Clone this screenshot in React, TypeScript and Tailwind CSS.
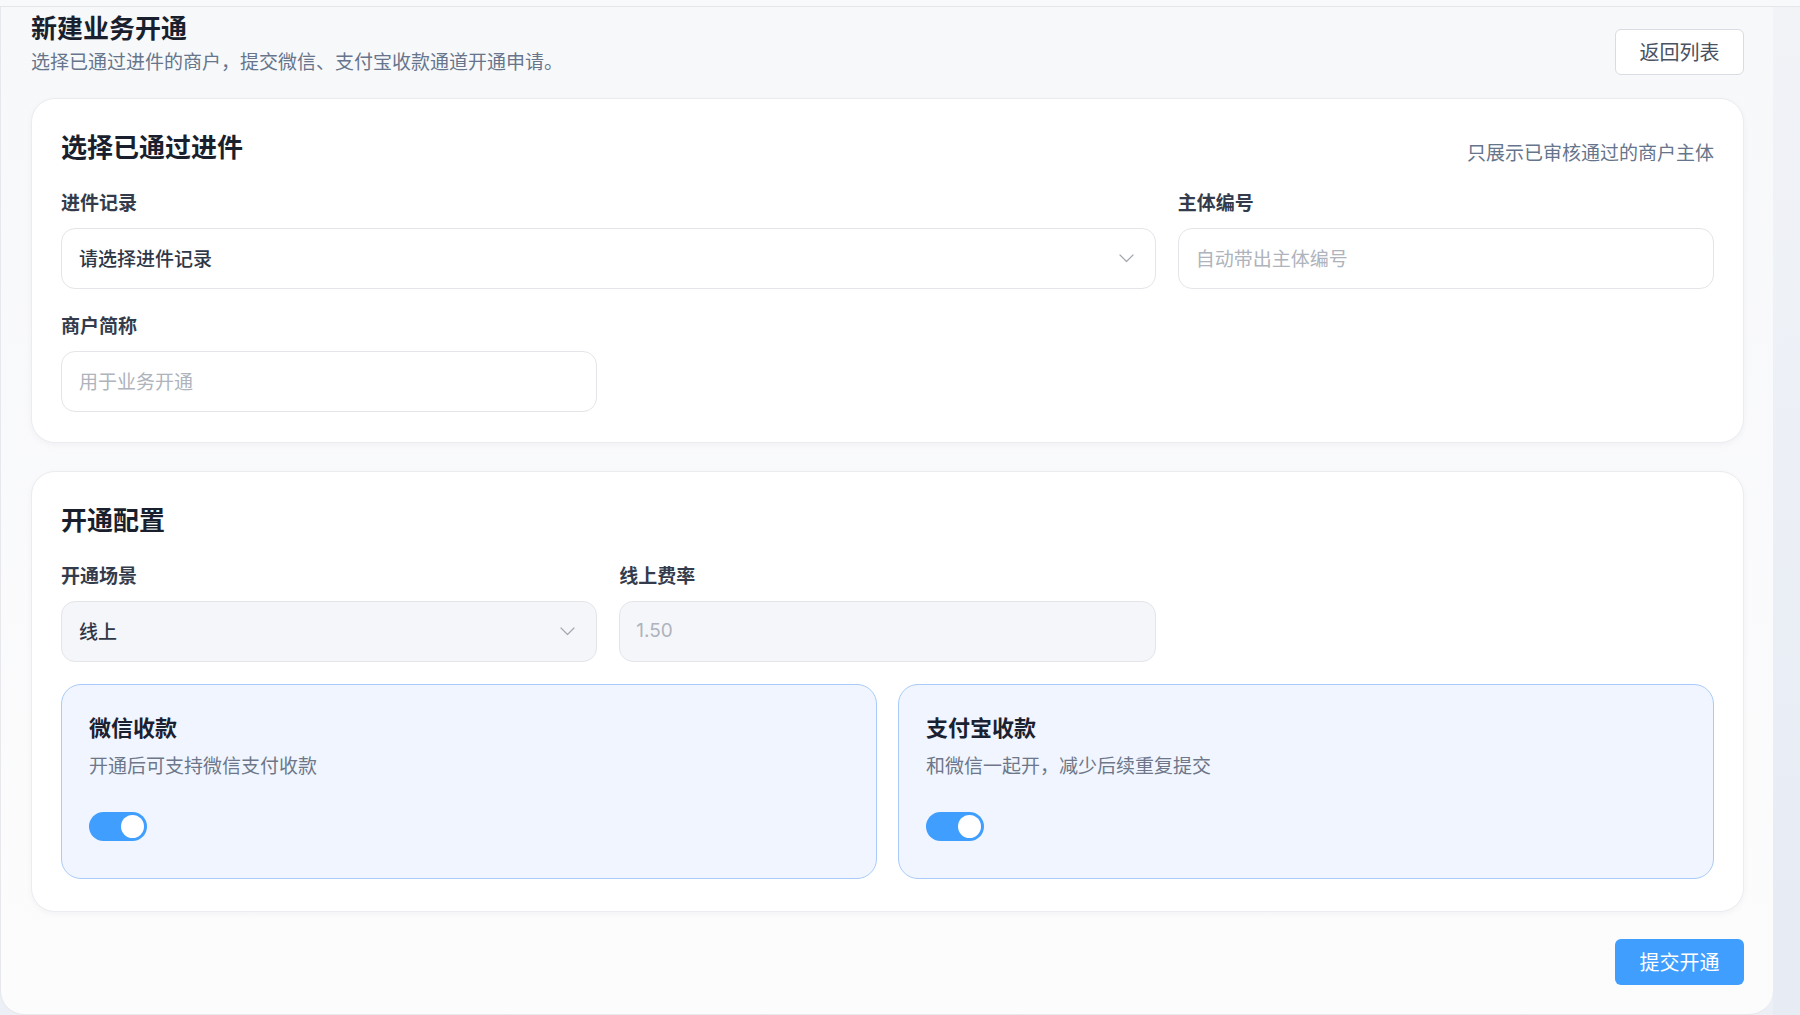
const font = { fontFamily: '"Noto Sans CJK SC", "Noto Sans", sans-serif' };

const Chevron = () => (
  <svg width="15" height="9" viewBox="0 0 15 9" fill="none" className="shrink-0">
    <polyline points="1,1 7.5,7.5 14,1" stroke="#a3a8b1" strokeWidth="1.2" strokeLinecap="round" strokeLinejoin="round" />
  </svg>
);

const Label = ({ children }: { children: React.ReactNode }) => (
  <div className="mb-[13px] text-[19px] leading-[26px] font-semibold text-[#343c4c]">{children}</div>
);

const Field = ({
  value,
  placeholder,
  select,
  muted,
}: {
  value?: string;
  placeholder?: string;
  select?: boolean;
  muted?: boolean;
}) => (
  <div
    className={`flex h-[61px] items-center justify-between rounded-[14px] border border-[#e3e5e9] pl-[17px] pr-[21px] ${
      muted ? 'bg-[#f5f6f9]' : 'bg-white'
    }`}
  >
    {value ? (
      <span className="text-[19px] font-medium text-[#2f3747]">{value}</span>
    ) : (
      <span className="text-[19px] text-[#aeb3bc]">{placeholder}</span>
    )}
    {select && <Chevron />}
  </div>
);

const Toggle = () => (
  <div className="flex h-[29px] w-[58px] items-center justify-end rounded-full bg-[#409eff] p-[3px]">
    <div className="h-[23px] w-[23px] rounded-full bg-white" />
  </div>
);

const ChannelCard = ({ title, desc }: { title: string; desc: string }) => (
  <div className="rounded-[20px] border border-[#a9cbfa] bg-[#f0f5ff] px-[27px] pt-[26px] pb-[37px]">
    <div className="text-[22px] leading-[30px] font-bold text-[#1b2130]">{title}</div>
    <div className="mt-[11px] text-[19px] leading-[26px] text-[#6d7789]">{desc}</div>
    <div className="mt-[34px]">
      <Toggle />
    </div>
  </div>
);

export default function App() {
  return (
    <div className="min-h-screen w-full bg-[#eceff5]" style={font}>
      <div className="h-[7px] border-b border-[#e4e6ea] bg-[#f8f9fa]" />
      <div className="flex">
        <div className="w-[1773px] rounded-b-[24px] border-l border-b border-[#e6e8ec] bg-gradient-to-b from-[#f7f8fa] to-[#fcfcfd] pl-[30px] pr-[29px] pt-[3px] pb-[29px]">
          <div className="flex items-end justify-between">
            <div>
              <h1 className="text-[26px] leading-[34px] font-bold text-[#1a1f2d]">新建业务开通</h1>
              <p className="mt-[3px] text-[19px] leading-[28px] text-[#66758c]">
                选择已通过进件的商户，提交微信、支付宝收款通道开通申请。
              </p>
            </div>
            <button className="h-[46px] w-[129px] rounded-[6px] border border-[#d9dce2] bg-white text-[20px] text-[#4a5160]">
              返回列表
            </button>
          </div>

          <section className="mt-[23px] rounded-[24px] border border-[#eaecf0] bg-white px-[29px] pt-[27px] pb-[30px] shadow-[0_2px_6px_rgba(15,23,42,0.04)]">
            <div className="flex items-center justify-between">
              <h2 className="text-[26px] leading-[36px] font-bold text-[#1a1f2d]">选择已通过进件</h2>
              <span className="mt-[12px] text-[19px] text-[#66758c]">只展示已审核通过的商户主体</span>
            </div>
            <div className="mt-[22px] grid grid-cols-3 gap-x-[22px] gap-y-[23px]">
              <div className="col-span-2">
                <Label>进件记录</Label>
                <Field value="请选择进件记录" select />
              </div>
              <div>
                <Label>主体编号</Label>
                <Field placeholder="自动带出主体编号" />
              </div>
              <div>
                <Label>商户简称</Label>
                <Field placeholder="用于业务开通" />
              </div>
            </div>
          </section>

          <section className="mt-[28px] rounded-[24px] border border-[#eaecf0] bg-white px-[29px] pt-[29px] pb-[32px] shadow-[0_2px_6px_rgba(15,23,42,0.04)]">
            <h2 className="text-[26px] leading-[36px] font-bold text-[#1a1f2d]">开通配置</h2>
            <div className="mt-[25px] grid grid-cols-3 gap-x-[22px]">
              <div>
                <Label>开通场景</Label>
                <Field value="线上" select muted />
              </div>
              <div>
                <Label>线上费率</Label>
                <div className="flex h-[61px] items-center rounded-[14px] border border-[#e3e5e9] bg-[#f5f6f9] pl-[16px]">
                  <span className="text-[19px] text-[#aeb3bc]" style={{ fontFamily: 'Inter, "Noto Sans", sans-serif' }}>
                    1.50
                  </span>
                </div>
              </div>
            </div>
            <div className="mt-[22px] grid grid-cols-2 gap-[21px]">
              <ChannelCard title="微信收款" desc="开通后可支持微信支付收款" />
              <ChannelCard title="支付宝收款" desc="和微信一起开，减少后续重复提交" />
            </div>
          </section>

          <div className="mt-[27px] flex justify-end">
            <button className="h-[46px] w-[129px] rounded-[6px] bg-[#409eff] text-[20px] text-white">提交开通</button>
          </div>
        </div>
        <div className="flex-1 bg-gradient-to-b from-[#f1f3f7] to-[#e6ebf4]" />
      </div>
    </div>
  );
}
